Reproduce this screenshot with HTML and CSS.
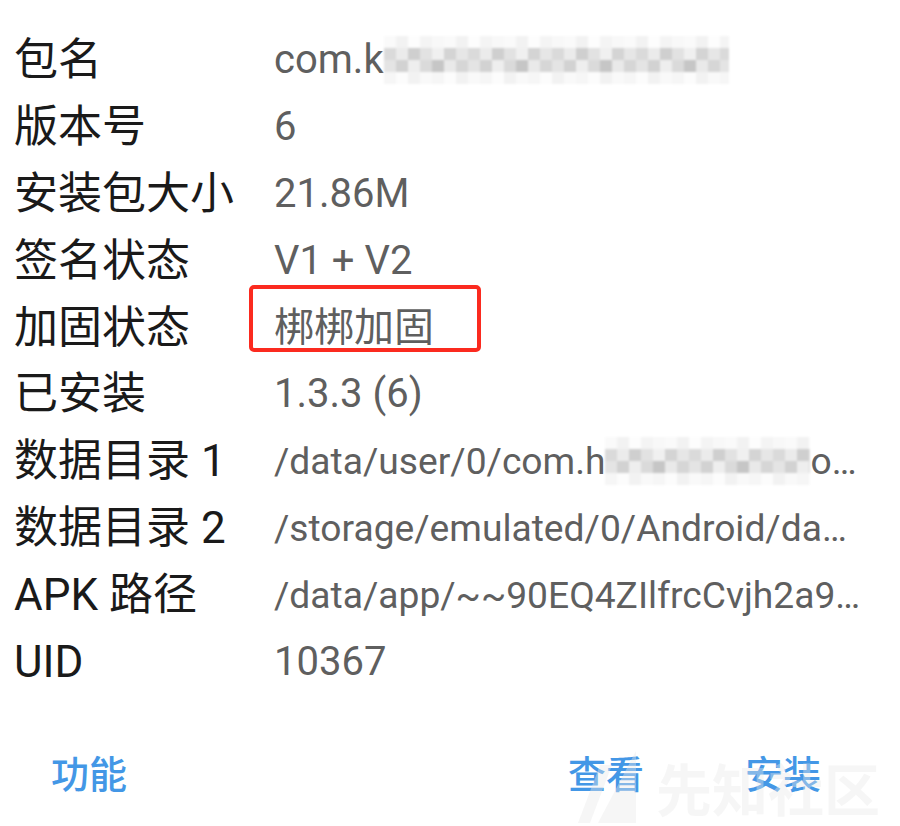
FILE: index.html
```html
<!DOCTYPE html>
<html lang="zh-CN">
<head>
<meta charset="utf-8">
<title>应用信息</title>
<link rel="stylesheet" href="styles.css">
</head>
<body>
<div class="sheet">
  <div class="info">
    <div class="row">
      <div class="label">包名</div>
      <div class="value">com.k<span class="mosaic wide" aria-hidden="true"></span></div>
    </div>
    <div class="row">
      <div class="label">版本号</div>
      <div class="value">6</div>
    </div>
    <div class="row">
      <div class="label">安装包大小</div>
      <div class="value">21.86M</div>
    </div>
    <div class="row">
      <div class="label">签名状态</div>
      <div class="value">V1 + V2</div>
    </div>
    <div class="row">
      <div class="label">加固状态</div>
      <div class="value">梆梆加固</div>
      <div class="mark"></div>
    </div>
    <div class="row">
      <div class="label">已安装</div>
      <div class="value">1.3.3 (6)</div>
    </div>
    <div class="row">
      <div class="label">数据目录 1</div>
      <div class="value path">/data/user/0/com.h<span class="mosaic short" aria-hidden="true"></span>o…</div>
    </div>
    <div class="row">
      <div class="label">数据目录 2</div>
      <div class="value path">/storage/emulated/0/Android/da…</div>
    </div>
    <div class="row">
      <div class="label">APK 路径</div>
      <div class="value path">/data/app/~~90EQ4ZIlfrcCvjh2a9…</div>
    </div>
    <div class="row">
      <div class="label">UID</div>
      <div class="value">10367</div>
    </div>
  </div>
  <div class="actions">
    <span class="btn">功能</span>
    <div class="right">
      <span class="btn">查看</span>
      <span class="btn">安装</span>
    </div>
    <div class="watermark">
      <svg class="wm-logo" width="64" height="72" viewBox="0 0 64 72">
        <polygon points="0,72 22,14 34,14 12,72" />
        <polygon points="20,72 58,0 58,72" />
      </svg>
      <span class="wm-text">先知社区</span>
    </div>
  </div>
</div>
</body>
</html>
```
FILE: styles.css
```css
html, body {
  margin: 0;
  padding: 0;
  background: #ffffff;
}

body {
  font-family: Roboto, "Noto Sans CJK SC", sans-serif;
}

.sheet {
  width: 900px;
  height: 826px;
  overflow: hidden;
}

.info {
  padding: 27px 0 0 14px;
  display: flex;
  flex-direction: column;
}

.row {
  position: relative;
  display: flex;
  align-items: center;
  height: 66.8px;
}

.label {
  width: 260px;
  flex: none;
  font-size: 44px;
  line-height: 66px;
  color: #1a1a1a;
  white-space: nowrap;
}

.value {
  font-size: 40px;
  line-height: 66px;
  color: #5f5f5f;
  white-space: nowrap;
}

.value.path {
  font-size: 37.2px;
}

.mosaic {
  display: inline-block;
  vertical-align: middle;
  height: 48px;
  margin-top: -6px;
  filter: blur(1px);
  background-repeat: no-repeat;
  background-image:
    repeating-linear-gradient(90deg, #fafafa 0 12px, #f2f2f2 12px 24px, #fdfdfd 24px 36px, #f4f4f4 36px 48px, #f8f8f8 48px 60px),
    repeating-linear-gradient(90deg, #dadada 0 12px, #ebebeb 12px 24px, #cfcfcf 24px 36px, #e2e2e2 36px 48px, #f0f0f0 48px 60px, #d4d4d4 60px 72px, #e6e6e6 72px 84px),
    repeating-linear-gradient(90deg, #e4e4e4 0 12px, #d2d2d2 12px 24px, #eeeeee 24px 36px, #dadada 36px 48px, #c6c6c6 48px 60px, #e9e9e9 60px 72px, #d6d6d6 72px 84px),
    repeating-linear-gradient(90deg, #f6f6f6 0 12px, #fcfcfc 12px 24px, #f2f2f2 24px 36px, #f9f9f9 36px 48px);
  background-size: 100% 12px, 100% 12px, 100% 12px, 100% 12px;
  background-position: 0 0, 0 12px, 0 24px, 0 36px;
}

.mosaic.wide {
  width: 345px;
}

.mosaic.short {
  width: 205px;
}

.mark {
  position: absolute;
  left: 235px;
  top: -9px;
  width: 232px;
  height: 67px;
  box-sizing: border-box;
  border: 4px solid #fb2a1f;
  border-radius: 5px;
}

.actions {
  position: relative;
  margin-top: 47px;
  height: 60px;
  padding: 0 79px 0 51px;
  display: flex;
  align-items: center;
  justify-content: space-between;
}

.right {
  display: flex;
  gap: 101px;
}

.btn {
  font-family: "Noto Sans CJK SC", sans-serif;
  font-size: 38px;
  font-weight: 500;
  line-height: 60px;
  color: #4397e6;
}

.watermark {
  position: absolute;
  left: 578px;
  top: 9px;
  display: flex;
  align-items: center;
  gap: 14px;
  pointer-events: none;
}

.wm-logo polygon {
  fill: rgba(232, 232, 232, 0.4);
}

.wm-text {
  font-family: "Noto Sans CJK SC", sans-serif;
  font-size: 56px;
  font-weight: 700;
  line-height: 60px;
  color: rgba(232, 232, 232, 0.4);
}
```
